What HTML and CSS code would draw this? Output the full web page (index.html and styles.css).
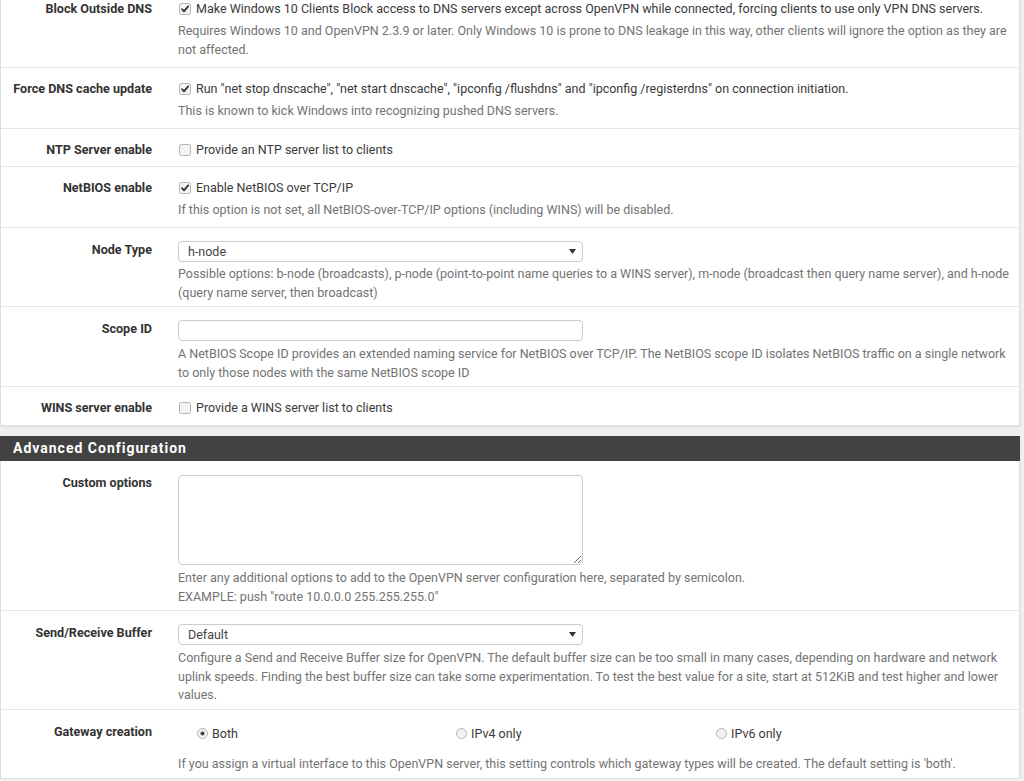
FILE: index.html
```html
<!DOCTYPE html>
<html>
<head>
<meta charset="utf-8">
<link rel="stylesheet" href="styles.css">
</head>
<body>
<div class="panel first">
  <div class="row">
    <div class="label">Block Outside DNS</div>
    <div class="content">
      <div class="check-line"><span class="cb checked"><svg width="12" height="12" viewBox="0 0 12 12"><rect x="0.5" y="0.5" width="11" height="11" rx="2" class="box"/><path d="M3 6.2 L5 8.3 L9.2 3.4" class="tick"/></svg></span>Make Windows 10 Clients Block access to DNS servers except across OpenVPN while connected, forcing clients to use only VPN DNS servers.</div>
      <div class="help">Requires Windows 10 and OpenVPN 2.3.9 or later. Only Windows 10 is prone to DNS leakage in this way, other clients will ignore the option as they are not affected.</div>
    </div>
  </div>
  <div class="row only">
    <div class="label">Force DNS cache update</div>
    <div class="content">
      <div class="check-line"><span class="cb checked"><svg width="12" height="12" viewBox="0 0 12 12"><rect x="0.5" y="0.5" width="11" height="11" rx="2" class="box"/><path d="M3 6.2 L5 8.3 L9.2 3.4" class="tick"/></svg></span>Run "net stop dnscache", "net start dnscache", "ipconfig /flushdns" and "ipconfig /registerdns" on connection initiation.</div>
      <div class="help">This is known to kick Windows into recognizing pushed DNS servers.</div>
    </div>
  </div>
  <div class="row only">
    <div class="label">NTP Server enable</div>
    <div class="content">
      <div class="check-line"><span class="cb"><svg width="12" height="12" viewBox="0 0 12 12"><rect x="0.5" y="0.5" width="11" height="11" rx="2" class="box"/></svg></span>Provide an NTP server list to clients</div>
    </div>
  </div>
  <div class="row">
    <div class="label">NetBIOS enable</div>
    <div class="content">
      <div class="check-line"><span class="cb checked"><svg width="12" height="12" viewBox="0 0 12 12"><rect x="0.5" y="0.5" width="11" height="11" rx="2" class="box"/><path d="M3 6.2 L5 8.3 L9.2 3.4" class="tick"/></svg></span>Enable NetBIOS over TCP/IP</div>
      <div class="help">If this option is not set, all NetBIOS-over-TCP/IP options (including WINS) will be disabled.</div>
    </div>
  </div>
  <div class="row ctl-row">
    <div class="label">Node Type</div>
    <div class="content">
      <div class="select"><span>h-node</span><svg width="7" height="5" viewBox="0 0 7 5"><path d="M0 0 H7 L3.5 5 Z" fill="#333"/></svg></div>
      <div class="help tight">Possible options: b-node (broadcasts), p-node (point-to-point name queries to a WINS server), m-node (broadcast then query name server), and h-node (query name server, then broadcast)</div>
    </div>
  </div>
  <div class="row ctl-row">
    <div class="label">Scope ID</div>
    <div class="content">
      <input class="text-input" type="text">
      <div class="help">A NetBIOS Scope ID provides an extended naming service for NetBIOS over TCP/IP. The NetBIOS scope ID isolates NetBIOS traffic on a single network to only those nodes with the same NetBIOS scope ID</div>
    </div>
  </div>
  <div class="row last">
    <div class="label">WINS server enable</div>
    <div class="content">
      <div class="check-line"><span class="cb"><svg width="12" height="12" viewBox="0 0 12 12"><rect x="0.5" y="0.5" width="11" height="11" rx="2" class="box"/></svg></span>Provide a WINS server list to clients</div>
    </div>
  </div>
</div>

<div class="panel second">
  <div class="heading">Advanced Configuration</div>
  <div class="row ctl-row">
    <div class="label">Custom options</div>
    <div class="content">
      <textarea class="textarea"></textarea>
      <div class="help">Enter any additional options to add to the OpenVPN server configuration here, separated by semicolon.<br>EXAMPLE: push "route 10.0.0.0 255.255.255.0"</div>
    </div>
  </div>
  <div class="row ctl-row">
    <div class="label">Send/Receive Buffer</div>
    <div class="content">
      <div class="select"><span>Default</span><svg width="7" height="5" viewBox="0 0 7 5"><path d="M0 0 H7 L3.5 5 Z" fill="#333"/></svg></div>
      <div class="help">Configure a Send and Receive Buffer size for OpenVPN. The default buffer size can be too small in many cases, depending on hardware and network uplink speeds. Finding the best buffer size can take some experimentation. To test the best value for a site, start at 512KiB and test higher and lower values.</div>
    </div>
  </div>
  <div class="row radio-row">
    <div class="label">Gateway creation</div>
    <div class="content">
      <div class="radios">
        <div class="radio-item"><span class="rb checked"><svg width="11" height="11" viewBox="0 0 11 11"><circle cx="5.5" cy="5.5" r="5" class="rbox"/><circle cx="5.5" cy="5.5" r="2" fill="#444"/></svg></span>Both</div>
        <div class="radio-item"><span class="rb"><svg width="11" height="11" viewBox="0 0 11 11"><circle cx="5.5" cy="5.5" r="5" class="rbox"/></svg></span>IPv4 only</div>
        <div class="radio-item"><span class="rb"><svg width="11" height="11" viewBox="0 0 11 11"><circle cx="5.5" cy="5.5" r="5" class="rbox"/></svg></span>IPv6 only</div>
      </div>
      <div class="help radio-help">If you assign a virtual interface to this OpenVPN server, this setting controls which gateway types will be created. The default setting is 'both'.</div>
    </div>
  </div>
</div>
</body>
</html>
```

FILE: styles.css
```css
html, body {
  margin: 0;
  padding: 0;
}
body {
  background: #f0f0f0;
  font-family: Roboto, "Liberation Sans", sans-serif;
  font-size: 12.5px;
  color: #3a3a3a;
  overflow: hidden;
}
.panel {
  width: 1020px;
  box-sizing: border-box;
  background: #fff;
  border-left: 1px solid #dcdcdc;
  border-right: 1px solid #dcdcdc;
  box-shadow: 0 1px 2px rgba(0,0,0,0.08);
}
.first {
  margin-top: -12px;
  border-bottom: 1px solid #e2e2e2;
}
.second {
  margin-top: 10px;
}
.row {
  display: grid;
  grid-template-columns: 162px 1fr;
  padding: 12px 0 8px;
  border-bottom: 1px solid #e6e6e6;
  line-height: 18px;
}
.row.only {
  padding-bottom: 7px;
}
.row.ctl-row {
  padding: 13px 0 4px;
}
.row.radio-row {
  padding: 13px 0 5px;
}
.row.last {
  border-bottom: none;
  padding-bottom: 8px;
}
.label {
  text-align: right;
  font-weight: bold;
  font-size: 12.6px;
  padding-right: 11px;
  color: #333;
}
.content {
  padding-left: 15px;
  padding-right: 7px;
}
.check-line {
  display: flex;
  align-items: center;
  height: 18px;
}
.cb {
  display: inline-flex;
  width: 12px;
  height: 12px;
  margin-left: 1px;
  margin-right: 5px;
}
.box {
  fill: #f4f4f4;
  stroke: #b4b4b4;
  stroke-width: 1;
}
.tick {
  fill: none;
  stroke: #333;
  stroke-width: 1.8;
  stroke-linecap: round;
  stroke-linejoin: round;
}
.help {
  color: #737373;
  margin-top: 4px;
  line-height: 18.5px;
}
.help.tight {
  margin-top: 3px;
}
.select {
  width: 405px;
  height: 21px;
  box-sizing: border-box;
  border: 1px solid #cbcbcb;
  border-radius: 4px;
  display: flex;
  align-items: center;
  justify-content: space-between;
  padding: 0 6px 0 9px;
  color: #444;
  background: #fff;
}
.text-input {
  display: block;
  width: 405px;
  height: 21px;
  box-sizing: border-box;
  border: 1px solid #cbcbcb;
  border-radius: 4px;
  margin: 0;
  padding: 0 8px;
  font: inherit;
  outline: none;
}
.textarea {
  display: block;
  width: 405px;
  height: 90px;
  box-sizing: border-box;
  border: 1px solid #cbcbcb;
  border-radius: 4px;
  margin: 1px 0 0;
  padding: 4px 8px;
  font: inherit;
  outline: none;
}
.radios {
  display: grid;
  grid-template-columns: 259px 260px 259px;
  padding-left: 19px;
  height: 22px;
  align-items: center;
}
.radio-item {
  display: flex;
  align-items: center;
  color: #3a3a3a;
}
.rb {
  display: inline-flex;
  width: 11px;
  height: 11px;
  margin-right: 4px;
}
.rbox {
  fill: #f2f2f2;
  stroke: #b4b4b4;
  stroke-width: 1;
}
.radio-help {
  margin-top: 10px;
}
.heading {
  background: #424242;
  color: #fff;
  font-weight: bold;
  font-size: 14px;
  letter-spacing: 1px;
  height: 25px;
  line-height: 25px;
  padding-left: 13px;
  margin-left: -1px;
  margin-right: -1px;
}
```
